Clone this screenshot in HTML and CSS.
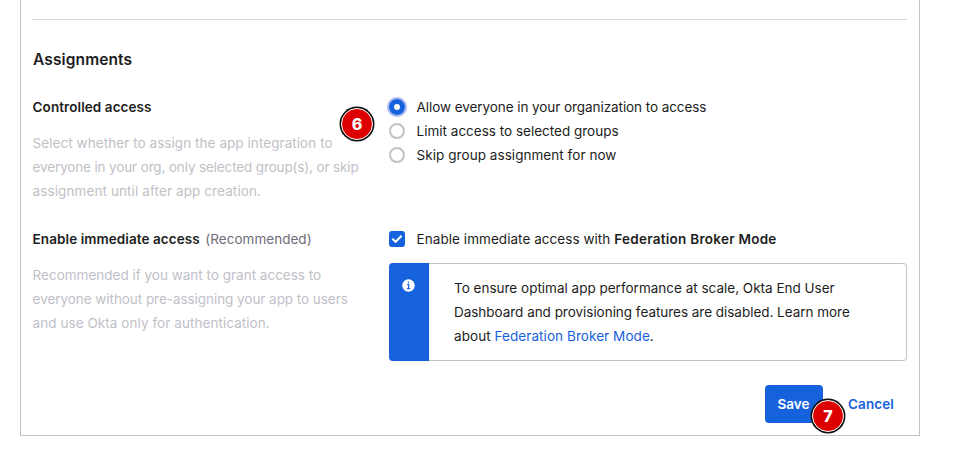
FILE: index.html
```html
<!DOCTYPE html>
<html lang="en">
<head>
<meta charset="utf-8">
<title>Assignments</title>
<link rel="stylesheet" href="styles.css">
</head>
<body>
<form class="panel">
  <section class="assignments">
    <h2>Assignments</h2>
    <div class="field access">
      <div class="info">
        <h3>Controlled access</h3>
        <p><span class="d1">Select whether to assign the app integration to</span><br><span class="d2">everyone in your org, only selected group(s), or skip</span><br><span class="d3">assignment until after app creation.</span></p>
        <span class="step step-six">6</span>
      </div>
      <div class="control">
        <div class="option"><span class="radio selected"></span><span class="o1">Allow everyone in your organization to access</span></div>
        <div class="option"><span class="radio"></span><span class="o2">Limit access to selected groups</span></div>
        <div class="option"><span class="radio"></span><span class="o3">Skip group assignment for now</span></div>
      </div>
    </div>
    <div class="field immediate">
      <div class="info">
        <h3>Enable immediate access<small>(Recommended)</small></h3>
        <p><span class="d4">Recommended if you want to grant access to</span><br><span class="d5">everyone without pre-assigning your app to users</span><br><span class="d6">and use Okta only for authentication.</span></p>
      </div>
      <div class="control">
        <div class="option"><svg class="check" viewBox="0 0 16 16"><rect width="16" height="16" rx="3"/><path d="M3.3 7.8 6.6 10.8 12.6 4.8"/></svg><span class="o4">Enable immediate access with <b>Federation Broker Mode</b></span></div>
        <div class="notice">
          <div class="notice-bar"><svg viewBox="0 0 13 13"><circle cx="6.5" cy="6.5" r="6.2" fill="#fff"/><path d="M5 5.5h1.6v4M5 9.6h3.2M6.5 2.8v1.4" fill="none" stroke="#1662dd" stroke-width="1.2"/></svg></div>
          <p><span class="n1">To ensure optimal app performance at scale, Okta End User</span><br><span class="n2">Dashboard and provisioning features are disabled. Learn more</span><br><span class="n3">about <a>Federation Broker Mode</a>.</span></p>
        </div>
      </div>
    </div>
  </section>
  <div class="actions">
    <button type="button" class="save">Save</button>
    <a class="cancel">Cancel</a>
    <span class="step step-seven">7</span>
  </div>
</form>
</body>
</html>
```
FILE: styles.css
```css
* { box-sizing: border-box; }
body {
  margin: 0;
  background: #fff;
  color: #1d1d21;
  font: 13.5px/24px Inter, "Liberation Sans", sans-serif;
  white-space: nowrap;
  overflow: hidden;
}
.panel {
  width: 900px;
  height: 436px;
  margin-left: 20px;
  padding: 19px 12px 0 11px;
  border: 1px solid #c1c1c8;
  border-top: 0;
}
.assignments { border-top: 1px solid #d7d7dc; padding-top: 27px; }
h2, h3, p { margin: 0; }
h2 { padding-left: 1px; font-size: 15.5px; font-weight: 600; line-height: 26px; letter-spacing: .12px; }
h3 { font-size: 13.5px; font-weight: 600; line-height: 24px; letter-spacing: .08px; }
h3 small { margin-left: 5.5px; font-size: 13.5px; font-weight: 400; letter-spacing: .03px; color: #6e6e78; }
.field { display: grid; grid-template-columns: 357px 518px; }
.access { height: 132px; margin-top: 22px; }
.info { position: relative; padding-left: .6px; }
.info p { margin-top: 12px; color: #c1c1c8; }
.option { display: flex; align-items: center; height: 24px; gap: 11.6px; }
.radio { width: 16px; height: 16px; border: 2px solid #c1c1c8; border-radius: 50%; }
.radio.selected { border: 5px solid #1662dd; box-shadow: 0 0 0 2px #a8b8f0; }
.check { width: 16px; height: 16px; fill: #1662dd; }
.check path { fill: none; stroke: #fff; stroke-width: 2; }
b { font-weight: 600; letter-spacing: .27px; }
a { color: #1662dd; }

/* Line tracking */
.d1 { letter-spacing: .06px; }
.d2 { letter-spacing: -.14px; }
.d3 { letter-spacing: .1px; }
.d5 { letter-spacing: -.05px; }
.d6 { letter-spacing: .06px; }
.o1 { letter-spacing: -.07px; }
.o3 { letter-spacing: .05px; }
.o4 { letter-spacing: .05px; }
.n2 { letter-spacing: -.03px; }
.n3 { letter-spacing: .07px; }

.notice {
  display: flex;
  height: 98px;
  margin-top: 12px;
  border: 1px solid #c1c1c8;
  border-left: 0;
  border-radius: 4px;
}
.notice-bar {
  width: 40px;
  margin: -1px 0;
  padding: 16px 0 0 13px;
  background: #1662dd;
  border-radius: 4px 0 0 4px;
}
.notice-bar svg { display: block; width: 13px; height: 13px; }
.notice p { padding: 12px 0 0 25px; }
.actions {
  position: relative;
  display: flex;
  align-items: center;
  justify-content: flex-end;
  gap: 25px;
  height: 38px;
  margin-top: 24px;
  padding-right: 14px;
}
.save {
  width: 58px;
  height: 38px;
  padding: 0 0 0 12.5px;
  border: 0;
  border-radius: 4px;
  background: #1662dd;
  color: #fff;
  font: 600 13.5px/24px Inter, "Liberation Sans", sans-serif;
  text-align: left;
}
.cancel { width: 45px; font-weight: 600; letter-spacing: .1px; }
.step {
  position: absolute;
  width: 32px;
  height: 32px;
  border: 1px solid #fff;
  border-radius: 50%;
  background: #dc0000;
  box-shadow: 0 0 0 1.5px #111;
  color: #fff;
  font: 800 16px/30px Inter, "Liberation Sans", sans-serif;
  text-align: center;
}
.step-six { left: 309px; top: 13px; }
.step-seven { left: 780px; top: 15px; }
```
